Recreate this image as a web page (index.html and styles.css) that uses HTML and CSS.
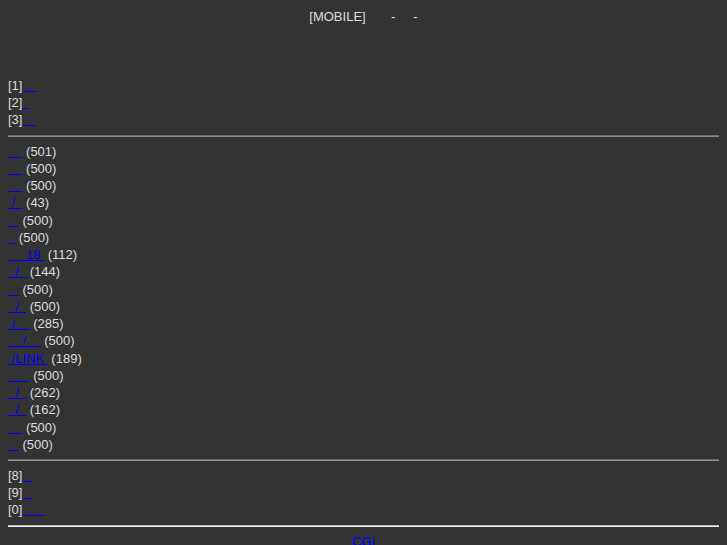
FILE: index.html
```html
<!DOCTYPE html>
<html lang="ja">
<head>
    <meta charset="UTF-8">
    <meta name="viewport" content="width=device-width, initial-scale=1.0">
    <title>MOBILE</title>
    <link rel="stylesheet" href="styles.css">
</head>
<body>

    <!-- Title -->
    <div class="title">[MOBILE]&nbsp;&nbsp;&nbsp;&nbsp;&nbsp;&nbsp;&nbsp;-&nbsp;&nbsp;&nbsp;&nbsp;&nbsp;-</div>

    <!-- Top menu -->
    <div class="menu">
        <div class="row">[1]<a href="#">&nbsp;&nbsp;&nbsp;&nbsp;</a></div>
        <div class="row">[2]<a href="#">&nbsp;&nbsp;</a></div>
        <div class="row">[3]<a href="#">&nbsp;&nbsp;&nbsp;&nbsp;</a></div>
    </div>

    <hr>

    <!-- Category list -->
    <div class="list">
        <div class="row"><a href="#">&nbsp;&nbsp;&nbsp;&nbsp;</a> (501)</div>
        <div class="row"><a href="#">&nbsp;&nbsp;&nbsp;&nbsp;</a> (500)</div>
        <div class="row"><a href="#">&nbsp;&nbsp;&nbsp;&nbsp;</a> (500)</div>
        <div class="row"><a href="#">&nbsp;/&nbsp;&nbsp;</a> (43)</div>
        <div class="row"><a href="#">&nbsp;&nbsp;&nbsp;</a> (500)</div>
        <div class="row"><a href="#">&nbsp;&nbsp;</a> (500)</div>
        <div class="row"><a href="#">&nbsp;&nbsp;&nbsp;&nbsp;&nbsp;18&nbsp;</a> (112)</div>
        <div class="row"><a href="#">&nbsp;&nbsp;/&nbsp;&nbsp;</a> (144)</div>
        <div class="row"><a href="#">&nbsp;&nbsp;&nbsp;</a> (500)</div>
        <div class="row"><a href="#">&nbsp;&nbsp;/&nbsp;&nbsp;</a> (500)</div>
        <div class="row"><a href="#">&nbsp;/&nbsp;&nbsp;&nbsp;&nbsp;</a> (285)</div>
        <div class="row"><a href="#">&nbsp;&nbsp;&nbsp;&nbsp;/&nbsp;&nbsp;&nbsp;&nbsp;</a> (500)</div>
        <div class="row"><a href="#">&nbsp;/LINK&nbsp;</a> (189)</div>
        <div class="row"><a href="#">&nbsp;&nbsp;&nbsp;&nbsp;&nbsp;&nbsp;</a> (500)</div>
        <div class="row"><a href="#">&nbsp;&nbsp;/&nbsp;&nbsp;</a> (262)</div>
        <div class="row"><a href="#">&nbsp;&nbsp;/&nbsp;&nbsp;</a> (162)</div>
        <div class="row"><a href="#">&nbsp;&nbsp;&nbsp;&nbsp;</a> (500)</div>
        <div class="row"><a href="#">&nbsp;&nbsp;&nbsp;</a> (500)</div>
    </div>

    <hr>

    <!-- Bottom menu -->
    <div class="menu">
        <div class="row">[8]<a href="#">&nbsp;&nbsp;&nbsp;</a></div>
        <div class="row">[9]<a href="#">&nbsp;&nbsp;&nbsp;</a></div>
        <div class="row">[0]<a href="#">&nbsp;&nbsp;&nbsp;&nbsp;&nbsp;&nbsp;</a></div>
    </div>

    <hr class="footer-line">

    <div class="footer"><a href="#">CGI</a></div>

</body>
</html>
```

FILE: styles.css
```css
/* Page */
body {
    margin: 8px;
    background-color: #333333;
    color: #dddddd;
    font-family: "Liberation Sans", Arial, sans-serif;
    font-size: 13px;
    line-height: 17px;
}

a {
    color: #0000ff;
    text-decoration: underline;
}

/* Title line, followed by three empty lines */
.title {
    text-align: center;
    margin-bottom: 52px;
}

/* Rows step 17.25px on average, kept on whole pixels */
.row:nth-child(4n) {
    padding-bottom: 1px;
}

.menu {
    padding-bottom: 1px;
}

/* Separators */
hr {
    margin: 6px 0;
    border: none;
    border-top: 1px solid #6a6a6a;
    border-bottom: 1px solid #8c8c8c;
    height: 0;
}

.footer-line {
    border-top-color: #bbbbbb;
    border-bottom-color: #eeeeee;
}

.footer {
    text-align: center;
}
```
